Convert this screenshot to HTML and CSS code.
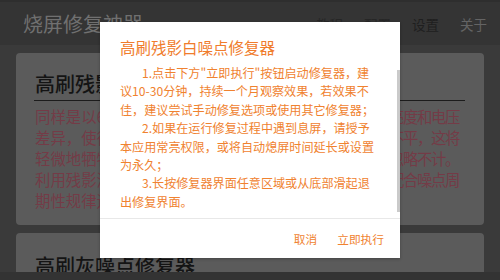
FILE: index.html
```html
<!DOCTYPE html>
<html lang="zh-CN">
<head>
<meta charset="utf-8">
<title>烧屏修复神器</title>
<link rel="stylesheet" href="styles.css">
</head>
<body>
<div class="app">
  <header class="topbar">
    <div class="app-title">烧屏修复神器</div>
    <nav class="nav">
      <span class="nav-item dim">教程</span>
      <span class="nav-item dim">配置</span>
      <span class="nav-item dark">设置</span>
      <span class="nav-item light">关于</span>
    </nav>
  </header>
  <main class="content">
    <section class="card card-first">
      <h2 class="card-title underlined">高刷残影白噪点修复器</h2>
      <div class="card-text">
        <p class="line"><span>同样是以60Hz刷新率显示时，</span><span class="tail">由于各像素亮度和电压</span></p>
        <p class="line"><span>差异，使得高刷屏幕上</span><span class="tail">残影呈现出不平，这将</span></p>
        <p class="line"><span>轻微地牺牲一部分显示</span><span class="tail">效果，可以忽略不计。</span></p>
        <p class="line"><span>利用残影消除算法刷新</span><span class="tail">屏幕，可以配合噪点周</span></p>
        <p class="line"><span>期性规律运行，从而修复残影。</span></p>
      </div>
    </section>
    <section class="card">
      <h2 class="card-title">高刷灰噪点修复器</h2>
    </section>
  </main>
  <div class="bottom-strip"></div>
</div>

<div class="dialog">
  <h3 class="dialog-title">高刷残影白噪点修复器</h3>
  <div class="dialog-body">
    <span class="dline indent">1.点击下方"立即执行"按钮启动修复器，建</span>
    <span class="dline">议10-30分钟，持续一个月观察效果，若效果不</span>
    <span class="dline">佳，建议尝试手动修复选项或使用其它修复器；</span>
    <span class="dline indent">2.如果在运行修复过程中遇到息屏，请授予</span>
    <span class="dline">本应用常亮权限，或将自动熄屏时间延长或设置</span>
    <span class="dline">为永久；</span>
    <span class="dline indent">3.长按修复器界面任意区域或从底部滑起退</span>
    <span class="dline">出修复界面。</span>
    <div class="thumb"></div>
  </div>
  <div class="dialog-actions">
    <span class="btn">取消</span>
    <span class="btn">立即执行</span>
  </div>
</div>
</body>
</html>
```

FILE: styles.css
```css
* { box-sizing: border-box; }
html, body { margin: 0; padding: 0; }
body {
  width: 500px;
  height: 280px;
  overflow: hidden;
  background: #3a3a3a;
  font-family: "Noto Sans CJK SC", "Noto Sans", sans-serif;
  position: relative;
}
.app {
  width: 500px;
  height: 280px;
  display: flex;
  flex-direction: column;
}
.topbar {
  height: 45px;
  flex: 0 0 45px;
  background: #343434;
  border-top: 2px solid #2e2e2e;
  display: flex;
  align-items: center;
  justify-content: space-between;
  padding: 0 13px 0 23px;
}
.app-title {
  font-size: 20px;
  line-height: 24px;
  color: #707070;
}
.nav {
  display: flex;
  gap: 21px;
}
.nav-item {
  font-size: 13.5px;
  line-height: 18px;
  width: 27px;
}
.nav-item.dim { color: #262626; }
.nav-item.dark { color: #1f1f1f; }
.nav-item.light { color: #646464; }

.content {
  flex: 1 1 auto;
  overflow: hidden;
  padding: 8px 16px 0 16px;
  display: flex;
  flex-direction: column;
  gap: 8px;
}
.card {
  background: #5b5b5b;
  border-radius: 4px;
  padding: 21px 19px 0 19px;
  flex: 0 0 auto;
}
.card-first {
  height: 172px;
  padding-top: 19px;
}
.card-title {
  margin: 0;
  font-size: 20px;
  line-height: 24px;
  font-weight: 500;
  color: #141414;
}
.card-title.underlined {
  padding-bottom: 4px;
  border-bottom: 1px solid #1c1c1c;
  margin-left: -1px;
  padding-left: 1px;
}
.card-text {
  margin-top: 5px;
  width: 424px;
  font-size: 15.4px;
  color: #743b47;
}
.line {
  margin: 0;
  display: flex;
  justify-content: space-between;
  line-height: 21px;
  white-space: nowrap;
}
.tail {
  letter-spacing: -1.4px;
}
.bottom-strip {
  height: 8px;
  flex: 0 0 8px;
  background: #333333;
}

.dialog {
  position: absolute;
  left: 100px;
  top: 22px;
  width: 300px;
  height: 236px;
  background: #ffffff;
  display: flex;
  flex-direction: column;
  box-shadow: 0 1px 3px rgba(0, 0, 0, 0.25);
}
.dialog-title {
  margin: 0;
  padding: 15px 20px 0 20px;
  font-size: 15.5px;
  line-height: 20px;
  font-weight: 400;
  color: #f07c2c;
}
.dialog-body {
  position: relative;
  margin-top: 7px;
  padding: 0 20px 0 20px;
  height: 155px;
  border-bottom: 1px solid #e8e8e8;
  font-size: 12.1px;
  color: #f0822f;
}
.dline {
  display: block;
  line-height: 18.4px;
  white-space: nowrap;
}
.dline.indent { text-indent: 22px; }
.thumb {
  position: absolute;
  right: 0;
  top: 6px;
  width: 3px;
  height: 142px;
  background: #cacaca;
}
.dialog-actions {
  flex: 1 1 auto;
  display: flex;
  justify-content: flex-end;
  align-items: center;
  gap: 20px;
  padding: 0 16px 0 0;
}
.btn {
  font-size: 11.7px;
  line-height: 16px;
  color: #f0822f;
  margin-top: 1px;
}
```
